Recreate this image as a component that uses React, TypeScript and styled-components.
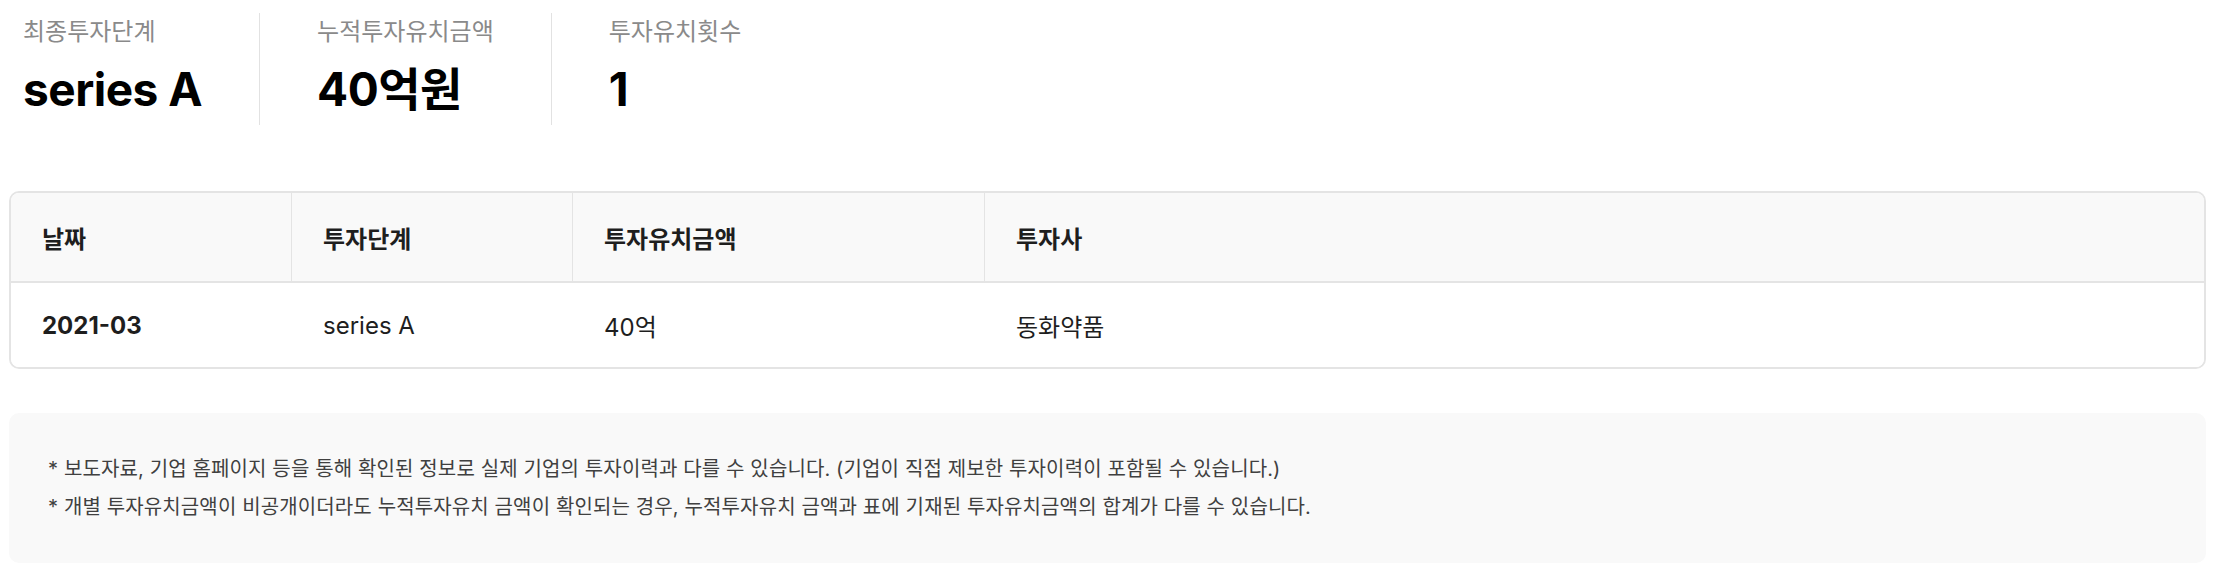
import React from "react";
import styled, { createGlobalStyle } from "styled-components";

const GlobalStyle = createGlobalStyle`
    html, body {
        margin: 0;
        padding: 0;
        background: #ffffff;
    }
    body {
        font-family: "Inter", "Noto Sans CJK KR", sans-serif;
        color: #222222;
    }
`;

const Page = styled.div`
    padding: 13px 8px 0 9px;
    width: 2214px;
    box-sizing: border-box;
`;

const StatRow = styled.div`
    display: flex;
    padding-left: 14px;
`;

const StatItem = styled.div<{ $first?: boolean }>`
    display: flex;
    flex-direction: column;
    height: 112px;
    box-sizing: border-box;
    padding: 4px 57px 0 ${p => p.$first ? '0' : '57px'};
    border-left: ${p => p.$first ? 'none' : '1px solid #e2e2e2'};
`;

const StatLabel = styled.div`
    font-size: 24px;
    line-height: 30px;
    color: #8a8a8a;
    white-space: nowrap;
`;

const StatValue = styled.div`
    margin-top: 14px;
    font-size: 46px;
    line-height: 56px;
    font-weight: 700;
    color: #000000;
    letter-spacing: -0.5px;
    white-space: nowrap;
`;

const Table = styled.div`
    margin-top: 66px;
    border: 2px solid #e4e4e4;
    border-radius: 10px;
    overflow: hidden;
`;

const TableRow = styled.div<{ $head?: boolean }>`
    display: grid;
    grid-template-columns: 281px 281px 412px 1fr;
    height: ${p => p.$head ? '88px' : '84px'};
    background: ${p => p.$head ? '#f9f9f9' : '#ffffff'};
    border-bottom: ${p => p.$head ? '2px solid #e4e4e4' : 'none'};
`;

const Cell = styled.div<{ $head?: boolean; $bold?: boolean }>`
    display: flex;
    align-items: center;
    padding-left: 31px;
    font-size: 24px;
    font-weight: ${p => p.$bold ? 700 : 400};
    color: #1e1e1e;
    border-right: ${p => p.$head ? '1px solid #e4e4e4' : 'none'};
    white-space: nowrap;
    &:last-child {
        border-right: none;
    }
`;

const Notice = styled.div`
    margin-top: 44px;
    background: #f9f9f9;
    border-radius: 10px;
    padding: 37px 38px 37px 39px;
`;

const NoticeLine = styled.p`
    margin: 0;
    font-size: 20px;
    line-height: 38px;
    letter-spacing: 0.13px;
    color: #404040;
    white-space: nowrap;
`;

const stats = [
    { label: '최종투자단계', value: 'series A' },
    { label: '누적투자유치금액', value: '40억원' },
    { label: '투자유치횟수', value: '1' },
];

const headers = ['날짜', '투자단계', '투자유치금액', '투자사'];

const rows = [
    { date: '2021-03', stage: 'series A', amount: '40억', investor: '동화약품' },
];

const notes = [
    '* 보도자료, 기업 홈페이지 등을 통해 확인된 정보로 실제 기업의 투자이력과 다를 수 있습니다. (기업이 직접 제보한 투자이력이 포함될 수 있습니다.)',
    '* 개별 투자유치금액이 비공개이더라도 누적투자유치 금액이 확인되는 경우, 누적투자유치 금액과 표에 기재된 투자유치금액의 합계가 다를 수 있습니다.',
];

export default function App() {
    return (
        <>
            <GlobalStyle />
            <Page>
                <StatRow>
                    {stats.map((s, i) => (
                        <StatItem key={s.label} $first={i === 0}>
                            <StatLabel>{s.label}</StatLabel>
                            <StatValue>{s.value}</StatValue>
                        </StatItem>
                    ))}
                </StatRow>

                <Table>
                    <TableRow $head>
                        {headers.map(h => (
                            <Cell key={h} $head $bold>{h}</Cell>
                        ))}
                    </TableRow>
                    {rows.map(r => (
                        <TableRow key={r.date}>
                            <Cell $bold>{r.date}</Cell>
                            <Cell>{r.stage}</Cell>
                            <Cell>{r.amount}</Cell>
                            <Cell>{r.investor}</Cell>
                        </TableRow>
                    ))}
                </Table>

                <Notice>
                    {notes.map(n => (
                        <NoticeLine key={n}>{n}</NoticeLine>
                    ))}
                </Notice>
            </Page>
        </>
    );
}
